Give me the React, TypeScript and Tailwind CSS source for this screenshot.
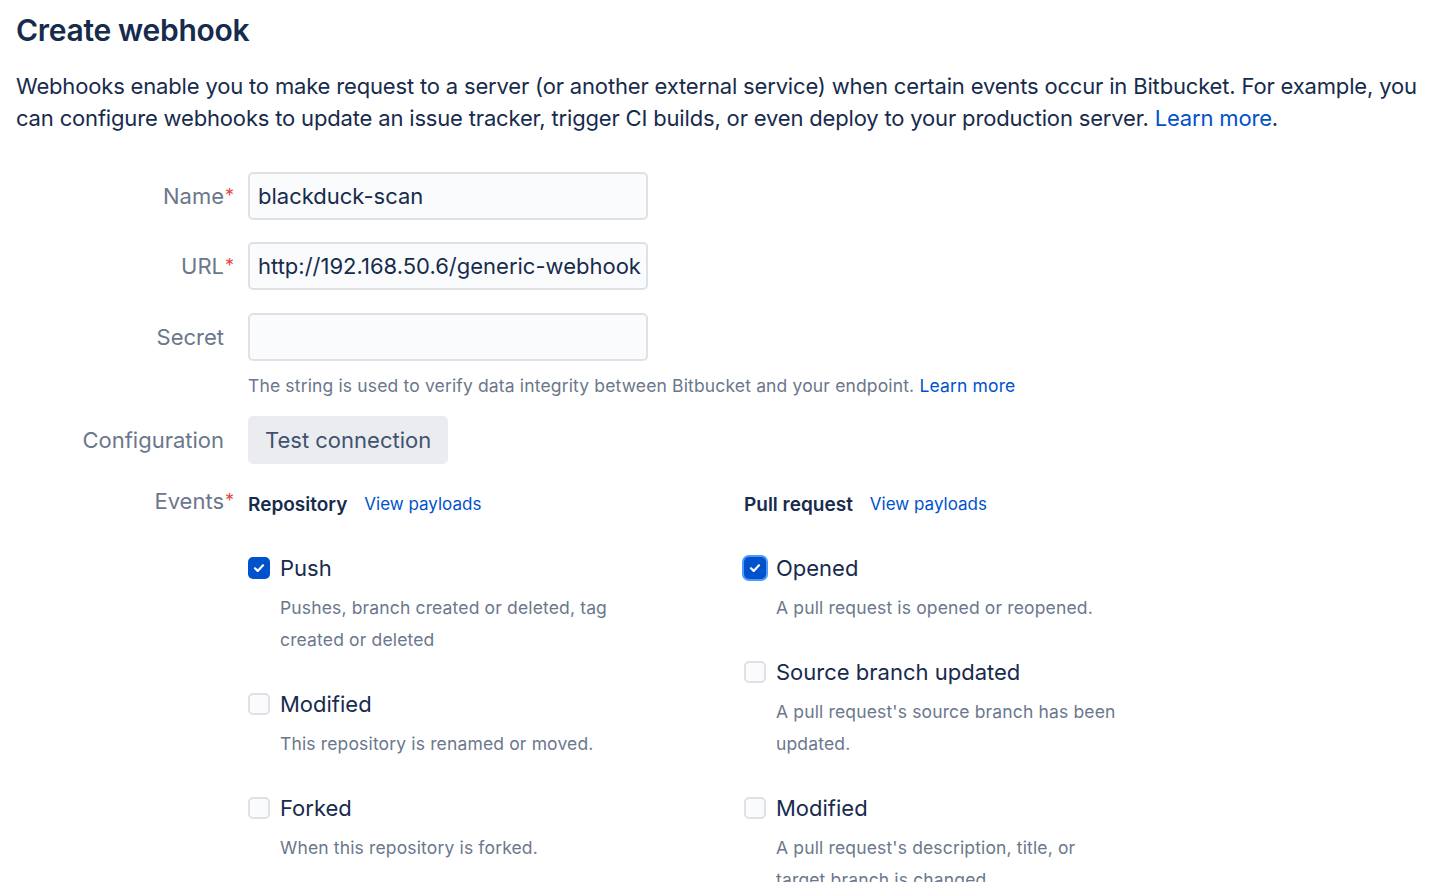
import React from "react";

function Check({ checked, focus }: { checked?: boolean; focus?: boolean }) {
  if (checked) {
    return (
      <span
        className={
          "flex h-[22px] w-[22px] shrink-0 items-center justify-center rounded-[5px] bg-[#0052cc] " +
          (focus ? "ring-2 ring-[#4c9aff]" : "")
        }
      >
        <svg width="16" height="16" viewBox="0 0 16 16" fill="none">
          <path d="M4 8.3l2.7 2.6 5.3-5.6" stroke="white" strokeWidth="2.2" strokeLinecap="round" strokeLinejoin="round" />
        </svg>
      </span>
    );
  }
  return <span className="block h-[22px] w-[22px] shrink-0 rounded-[5px] border-2 border-[#dfe1e6] bg-[#fafbfc]" />;
}

function Item({ label, desc, checked, focus }: { label: string; desc: string; checked?: boolean; focus?: boolean }) {
  return (
    <div>
      <div className="flex h-8 items-center gap-[10px]">
        <Check checked={checked} focus={focus} />
        <span className="text-[22px] text-[#172b4d]">{label}</span>
      </div>
      <p className="ml-8 mt-[8px] w-[348px] text-[17.5px] leading-8 tracking-[0.15px] text-[#6b778c]">{desc}</p>
    </div>
  );
}

function Label({ text, req }: { text: string; req?: boolean }) {
  return (
    <div className="flex w-[208px] shrink-0 justify-end">
      <span className="relative text-[22px] leading-8 text-[#6b778c]">
        {text}
        {req && <span className="absolute left-full top-0 pl-[1px] text-[18px] text-[#e5493a]">*</span>}
      </span>
    </div>
  );
}

export default function App() {
  return (
    <div className="min-h-screen bg-white px-4 font-['Inter',sans-serif] text-[#172b4d]">
      <h1 className="pt-[10px] text-[30px] font-semibold leading-10 tracking-[-0.3px] text-[#172b4d]">Create webhook</h1>
      <p className="mt-[20px] text-[22px] leading-8 tracking-[-0.17px] text-[#172b4d]">
        Webhooks enable you to make request to a server (or another external service) when certain events occur in Bitbucket. For example, you can configure webhooks to update an issue tracker, trigger CI builds, or even deploy to your production server.{" "}
        <span className="text-[#0052cc]">Learn more</span>.
      </p>

      <div className="mt-[38px] flex flex-col">
        <div className="flex items-center gap-6">
          <Label text="Name" req />
          <div className="flex h-12 w-[400px] items-center rounded-[5px] border-2 border-[#dfe1e6] bg-[#fafbfc] px-2 text-[22px] text-[#172b4d]">
            blackduck-scan
          </div>
        </div>
        <div className="mt-[22px] flex items-center gap-6">
          <Label text="URL" req />
          <div className="flex h-12 w-[400px] items-center overflow-hidden whitespace-nowrap rounded-[5px] border-2 border-[#dfe1e6] bg-[#fafbfc] px-2 text-[22px] text-[#172b4d]">
            http://192.168.50.6/generic-webhook
          </div>
        </div>
        <div className="mt-[23px] flex items-center gap-6">
          <Label text="Secret" />
          <div className="h-12 w-[400px] rounded-[5px] border-2 border-[#dfe1e6] bg-[#fafbfc]" />
        </div>
        <div className="mt-[13px] pl-[232px] text-[17.5px] leading-6 tracking-[0.15px] text-[#6b778c]">
          The string is used to verify data integrity between Bitbucket and your endpoint.{" "}
          <span className="text-[#0052cc]">Learn more</span>
        </div>
        <div className="mt-[18px] flex items-center gap-6">
          <Label text="Configuration" />
          <div className="flex h-12 items-center rounded-[5px] bg-[#ebecf0] px-[17px] text-[22px] text-[#42526e]">
            Test connection
          </div>
        </div>
        <div className="mt-[21px] flex gap-6">
          <Label text="Events" req />
          <div className="grid w-[992px] grid-cols-2 pt-[4px]">
            <div>
              <div className="flex h-8 items-center gap-[17px]">
                <span className="text-[19px] font-semibold text-[#172b4d]">Repository</span>
                <span className="text-[17px] text-[#0052cc]">View payloads</span>
              </div>
              <div className="mt-[31px] flex flex-col gap-[32px]">
                <Item label="Push" desc="Pushes, branch created or deleted, tag created or deleted" checked />
                <Item label="Modified" desc="This repository is renamed or moved." />
                <Item label="Forked" desc="When this repository is forked." />
              </div>
            </div>
            <div>
              <div className="flex h-8 items-center gap-[17px]">
                <span className="text-[19px] font-semibold text-[#172b4d]">Pull request</span>
                <span className="text-[17px] text-[#0052cc]">View payloads</span>
              </div>
              <div className="mt-[31px] flex flex-col gap-[32px]">
                <Item label="Opened" desc="A pull request is opened or reopened." checked focus />
                <Item label="Source branch updated" desc="A pull request's source branch has been updated." />
                <Item label="Modified" desc="A pull request's description, title, or target branch is changed." />
              </div>
            </div>
          </div>
        </div>
      </div>
    </div>
  );
}
